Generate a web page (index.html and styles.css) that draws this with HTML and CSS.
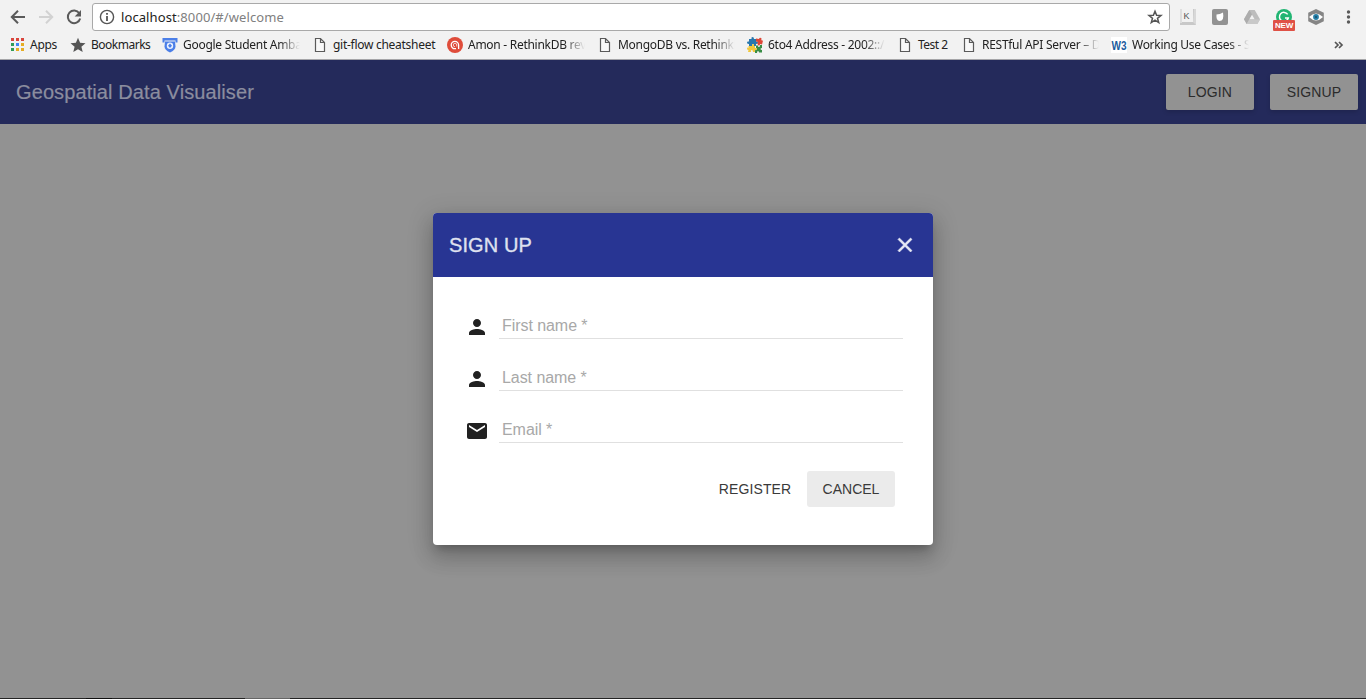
FILE: index.html
```
<!DOCTYPE html>
<html lang="en">
<head>
<meta charset="utf-8">
<title>Geospatial Data Visualiser</title>
<link rel="stylesheet" href="styles.css">
</head>
<body>
<svg class="defs" width="0" height="0">
  <symbol id="file" viewBox="0 0 16 16"><path d="M3.500 1.500h5l4 4v9h-9zM8.500 1.500v4h4" fill="#f8f8f8" stroke="#5a5a5a" stroke-width="1.200"/></symbol>
  <symbol id="person" viewBox="0 0 24 24"><path d="M12 12c2.210 0 4-1.790 4-4s-1.790-4-4-4-4 1.790-4 4 1.790 4 4 4zm0 2c-2.670 0-8 1.340-8 4v2h16v-2c0-2.660-5.330-4-8-4z"/></symbol>
</svg>
<header class="browser">
  <div class="toolbar">
    <svg class="nav" viewBox="0 0 16 16"><path d="M15 8H2M8 1.800L1.800 8 8 14.200" fill="none" stroke="#5a5a5a" stroke-width="2"/></svg>
    <svg class="nav" viewBox="0 0 16 16"><path d="M1 8h13M8 1.800L14.200 8 8 14.200" fill="none" stroke="#d2d2d2" stroke-width="2"/></svg>
    <svg class="nav" viewBox="0 0 16 16"><path d="M13.300 4.200A6.300 6.300 0 1 0 14.200 9.500" fill="none" stroke="#5a5a5a" stroke-width="2"/><path d="M15 1v6.500H8.700z" fill="#5a5a5a"/></svg>
    <div class="address">
      <svg class="info" viewBox="0 0 16 16"><circle cx="8" cy="8" r="6.600" fill="none" stroke="#555" stroke-width="1.400"/><path d="M7.100 7h1.800v5H7.100zM7.100 4h1.800v1.700H7.100z" fill="#555"/></svg>
      <span class="url"><b>localhost</b>:8000/#/welcome</span>
      <svg class="star" viewBox="0 0 16 16"><path d="M8 2.200l1.600 4.100 4.400.2-3.500 2.800 1.200 4.300L8 11.200l-3.700 2.400 1.200-4.300L2 6.500l4.400-.2z" fill="none" stroke="#555" stroke-width="1.500"/></svg>
    </div>
    <div class="extensions">
      <svg viewBox="0 0 16 16"><path d="M0 0h16v16H0z" fill="#c8c8c8"/><path d="M0 0h2v14H0z" fill="#dedede"/><path d="M2 0h11v13H2z" fill="#f1f1f1"/><path d="M13 13l3 3V0h-2z" fill="#d8d8d8"/><text class="key" x="3.500" y="9.500">K</text></svg>
      <svg viewBox="0 0 16 16"><rect width="16" height="16" rx="2" fill="#929292"/><path d="M4.500 5.500Q8 5.500 11 3.500q1.500 8.500-3.500 8.500-3.600 0-3-6.500z" fill="#fff"/></svg>
      <svg viewBox="0 0 16 16"><path d="M5.300 1h5.400L16 10.300 13.300 15H2.700L0 10.300z" fill="#bdbdbd"/><path d="M5.300 1L8 5.600 2.700 15 0 10.300z" fill="#adadad"/><path d="M8 5.800l2.600 4.500H5.400z" fill="#f2f2f2"/><path d="M5.200 10.500H16L13.300 15H2.700z" fill="#c9c9c9"/></svg>
      <div class="grammar"><svg viewBox="0 0 16 16"><circle cx="8" cy="8" r="8" fill="#22b573"/><path d="M11.700 5.400A4.500 4.500 0 1 0 12.300 9H9" fill="none" stroke="#fff" stroke-width="1.500"/></svg><span class="new">NEW</span></div>
      <svg class="hex" viewBox="0 0 16 16"><path d="M8 0l7.800 3.800v8.400L8 16 .2 12.200V3.800z" fill="#858585"/><path d="M1 8q7-7 14 0-7 7-14 0z" fill="#fff"/><circle cx="8" cy="8" r="2.900" fill="#267fa6"/><circle cx="8" cy="8" r="1" fill="#174b6b"/></svg>
      <svg class="menu" viewBox="0 0 16 16"><g fill="#5a5a5a"><circle cx="8.500" cy="3" r="1.700"/><circle cx="8.500" cy="8" r="1.700"/><circle cx="8.500" cy="13" r="1.700"/></g></svg>
    </div>
  </div>
  <nav class="bookmarks">
    <div class="bm"><svg viewBox="0 0 16 16"><path d="M2 1h3v3H2zM7 1h3v3H7zM12 1h3v3h-3z" fill="#d9453c"/><path d="M2 6h3v3H2zM2 11h3v3H2z" fill="#329c57"/><path d="M7 6h3v3H7z" fill="#4385f4"/><path d="M12 6h3v3h-3zM7 11h3v3H7zM12 11h3v3h-3z" fill="#e6ad24"/></svg><span>Apps</span></div>
    <div class="bm tight"><svg viewBox="0 0 16 16"><path d="M8 .8l2.100 5 5.400.4-4.100 3.500 1.300 5.300L8 12.200 3.300 15l1.300-5.300L.5 6.200l5.400-.4z" fill="#555"/></svg><span>Bookmarks</span></div>
    <div class="bm fade"><svg viewBox="0 0 16 16"><path d="M.5 1h15v4.500h-2V3.500h-11v2h-2z" fill="#4b7fe8"/><path d="M3 4.500h10l.5 5q0 3.500-5.500 6-5.500-2.500-5.500-6z" fill="#4b7fe8"/><circle cx="8" cy="8.700" r="3.200" fill="#e9f0ff"/><path d="M8 6.500l2 2.200-2 2.300-2-2.300z" fill="#4b7fe8"/></svg><span>Google Student Ambassador</span></div>
    <div class="bm"><svg viewBox="0 0 16 16"><use href="#file"/></svg><span>git-flow cheatsheet</span></div>
    <div class="bm fade"><svg viewBox="0 0 16 16"><circle cx="8" cy="8" r="8" fill="#df4c3a"/><path d="M11.600 12V8A3.700 3.700 0 1 0 8 11.700h1" fill="none" stroke="#fff" stroke-width="1.300"/><path d="M9.700 9.500V8A1.700 1.700 0 1 0 8 9.700" fill="none" stroke="#fff" stroke-width=".7"/></svg><span>Amon - RethinkDB review</span></div>
    <div class="bm fade"><svg viewBox="0 0 16 16"><use href="#file"/></svg><span>MongoDB vs. RethinkDB</span></div>
    <div class="bm fade"><svg viewBox="0 0 16 16"><path d="M2 2h2.500Q4 0 5.500 0T7 2h2v2.500q2-.5 2 1T9 7v2H7q.5-2-1-2T5 9H2V7Q0 7 0 5.500T2 4.500z" fill="#2877ae"/><path d="M9 1.500l3 .5q.5-2 2-1t0 2l2 .8-1 3.700-2-.5q0 2-1.500 1.500T11 7L9 7q2-.5 2-1.500t-2-1z" fill="#dd4637"/><path d="M1.500 9H5q-.5-2 1-2t1 2h1v2q2-.5 2 1t-2 1v2H6q0-2-1.300-2T4 15H1l.5-2Q0 13 0 11.500T1.500 11z" fill="#f1c83d"/><path d="M9 8.500h2q-.3 1.500 1 1.500t1-2h2v3q-1.500 0-1.500 1t1.500 1v2.500h-3Q12 14 11 14t-1 2H8v-3q2 .5 2-1t-1-1z" fill="#398d45"/></svg><span>6to4 Address - 2002::/16</span></div>
    <div class="bm tight"><svg viewBox="0 0 16 16"><use href="#file"/></svg><span>Test 2</span></div>
    <div class="bm fade"><svg viewBox="0 0 16 16"><use href="#file"/></svg><span>RESTful API Server – Documentation</span></div>
    <div class="bm fade"><svg viewBox="0 0 16 16"><path d="M0 0h16v16H0z" fill="#fff"/><text class="w3" x=".5" y="12.500" textLength="15" lengthAdjust="spacingAndGlyphs">W3</text></svg><span>Working Use Cases - Spatial</span></div>
    <svg class="more" viewBox="0 0 10 10"><path d="M1 2L4 5 1 8M5 2l3 3-3 3" fill="none" stroke="#555" stroke-width="1.700"/></svg>
  </nav>
</header>
<main class="app">
  <div class="appbar"><h1>Geospatial Data Visualiser</h1><button class="raised">LOGIN</button><button class="raised signup">SIGNUP</button></div>
  <div class="stage">
    <section class="dialog">
      <div class="dialog-head"><h2>SIGN UP</h2><svg viewBox="0 0 24 24"><path d="M19 6.410L17.590 5 12 10.590 6.410 5 5 6.410 10.590 12 5 17.590 6.410 19 12 13.410 17.590 19 19 17.590 13.410 12z"/></svg></div>
      <form class="fields">
        <label class="field"><svg viewBox="0 0 24 24"><use href="#person"/></svg><span>First name *</span></label>
        <label class="field"><svg viewBox="0 0 24 24"><use href="#person"/></svg><span>Last name *</span></label>
        <label class="field"><svg viewBox="0 0 24 24"><path d="M20 4H4c-1.100 0-1.990.9-1.990 2L2 18c0 1.100.9 2 2 2h16c1.100 0 2-.9 2-2V6c0-1.100-.9-2-2-2zm0 4l-8 5-8-5V6l8 5 8-5v2z"/></svg><span>Email *</span></label>
        <div class="actions"><button type="button">REGISTER</button><button type="button" class="cancel">CANCEL</button></div>
      </form>
    </section>
  </div>
  <div class="taskbar"><i class="dark"></i><i class="active"></i></div>
</main>
</body>
</html>
```
FILE: styles.css
```
* { box-sizing: border-box; }
body { margin: 0; width: 1366px; height: 699px; overflow: hidden; display: flex; flex-direction: column; font-family: "Liberation Sans", Arial, sans-serif; }
.defs { position: absolute; }
svg { display: block; flex: none; }
button { border: 0; padding: 0; background: none; font: 14px/36px "Liberation Sans", Arial, sans-serif; letter-spacing: .14px; }
.browser { height: 60px; flex: none; background: #f2f2f2; border-bottom: 1px solid #a5a5a8; font-family: "Noto Sans", "Open Sans", sans-serif; }
.toolbar { height: 34px; padding: 3px 8px 3px 10px; display: flex; align-items: center; }
.nav { width: 16px; height: 16px; margin-right: 12px; }
.address { width: 1078px; height: 28px; margin-left: -2px; border: 1px solid #a9a9a9; border-radius: 3px; background: #fff; display: flex; align-items: center; padding: 0 6px; }
.info { width: 16px; height: 16px; }
.url { margin-left: 6px; flex: 1; font-size: 13px; letter-spacing: .09px; color: #808080; }
.url b { font-weight: 400; color: #222; }
.star { width: 16px; height: 16px; }
.extensions { display: flex; gap: 16px; margin-left: 10px; }
.extensions svg { width: 16px; height: 16px; }
.key { font: 9px "Liberation Sans", sans-serif; fill: #555; }
.grammar { width: 16px; height: 16px; position: relative; }
.new { position: absolute; left: -3px; top: 11px; width: 22px; height: 11px; border-radius: 1px; background: #df5146; color: #fff; font: 700 8px/11px "Liberation Sans", sans-serif; letter-spacing: -.2px; text-align: center; }
.bookmarks { height: 22px; padding-left: 9px; display: grid; grid-template-columns: 61px 92px 150px 135px 150px 150px 150px 64px 150px 223px 10px; align-items: center; }
.bm { display: flex; align-items: center; gap: 5px; font-size: 12px; line-height: 20px; color: #222; white-space: nowrap; letter-spacing: -.28px; }
.tight { letter-spacing: -.5px; }
.bm svg { width: 16px; height: 16px; }
.fade span { width: 117px; overflow: hidden; -webkit-mask-image: linear-gradient(90deg, #000 82%, transparent); mask-image: linear-gradient(90deg, #000 82%, transparent); }
.w3 { font: 700 13px "Liberation Sans", sans-serif; letter-spacing: 0; fill: #1c5c9d; }
.more { width: 10px; height: 10px; }
.app { flex: 1; background: #929292; display: flex; flex-direction: column; }
.appbar { height: 64px; background: #242a5b; display: flex; align-items: center; padding: 0 8px 0 16px; gap: 16px; }
.appbar h1 { margin: 0; flex: 1; font-size: 20px; font-weight: 400; letter-spacing: .1px; color: #8b8d9f; -webkit-text-stroke: .2px #8b8d9f; }
.raised { width: 88px; height: 36px; border-radius: 2px; background: #929292; color: #2b2b2b; box-shadow: 0 2px 4px rgba(0,0,0,.15); }
.stage { flex: 1; display: flex; justify-content: center; align-items: flex-start; padding-top: 89px; }
.dialog { width: 500px; height: 332px; background: #fff; border-radius: 4px; overflow: hidden; box-shadow: 0 7px 8px -4px rgba(0,0,0,.2), 0 13px 19px 2px rgba(0,0,0,.14), 0 5px 24px 4px rgba(0,0,0,.12); }
.dialog-head { height: 64px; background: #283593; display: flex; align-items: center; justify-content: space-between; padding: 0 16px; }
.dialog-head h2 { margin: 0; font-size: 20px; font-weight: 400; letter-spacing: .1px; color: #dfe1ef; -webkit-text-stroke: .35px #dfe1ef; }
.dialog-head svg { width: 24px; height: 24px; fill: #e8eaf6; stroke: #e8eaf6; stroke-width: .6; }
.fields { padding: 32px 30px 0 32px; }
.field { height: 30px; margin-bottom: 22px; display: flex; gap: 10px; }
.field svg { width: 24px; height: 24px; margin-top: 6px; fill: #212121; }
.field span { flex: 1; border-bottom: 1px solid #e0e0e0; padding-left: 3px; font-size: 16px; line-height: 34px; letter-spacing: -.06px; color: #a8a8a8; }
.actions { display: flex; justify-content: flex-end; padding-top: 6px; margin-right: 8px; gap: 8px; }
.actions button { width: 88px; height: 36px; color: #3a3a3a; }
.actions .cancel { background: #ebebeb; border-radius: 3px; letter-spacing: 0; }
.taskbar { height: 1px; background: #242424; display: flex; padding-left: 86px; }
.dark { width: 26px; background: #101010; }
.active { width: 45px; margin-left: 133px; background: #666; }
```
